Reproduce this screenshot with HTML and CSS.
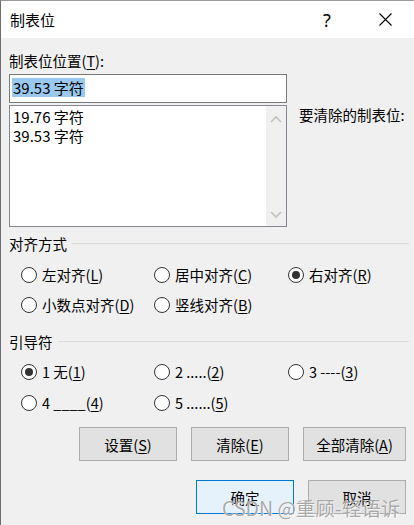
FILE: index.html
```html
<!DOCTYPE html>
<html lang="zh-CN">
<head>
<meta charset="utf-8">
<title>制表位</title>
<link rel="stylesheet" href="styles.css">
</head>
<body>
<div class="window">
  <div class="titlebar">
    <span class="title">制表位</span>
    <span class="help">?</span>
    <span class="close">
      <svg width="13" height="13" viewBox="0 0 13 13"><path d="M0.5 0.5 L12.5 12.5 M12.5 0.5 L0.5 12.5" stroke="#000" stroke-width="1.1" fill="none"/></svg>
    </span>
  </div>
  <div class="content">
    <div class="top">
      <div class="leftcol">
        <div class="label">制表位位置(<u>T</u>):</div>
        <div class="input"><span class="sel">39.53 字符</span></div>
        <div class="list">
          <div class="items">
            <div class="item">19.76 字符</div>
            <div class="item">39.53 字符</div>
          </div>
          <div class="scroll">
            <svg width="12" height="8" viewBox="0 0 12 8"><path d="M1 7 L6 2 L11 7" stroke="#c2c2c2" stroke-width="1.6" fill="none"/></svg>
            <svg width="12" height="8" viewBox="0 0 12 8"><path d="M1 1 L6 6 L11 1" stroke="#c2c2c2" stroke-width="1.6" fill="none"/></svg>
          </div>
        </div>
      </div>
      <div class="rightcol">要清除的制表位:</div>
    </div>

    <div class="group g1">
      <div class="heading"><span>对齐方式</span><i class="rule"></i></div>
      <div class="radios r1">
        <label class="radio"><span class="dot"></span>左对齐(<u>L</u>)</label>
        <label class="radio"><span class="dot"></span>居中对齐(<u>C</u>)</label>
        <label class="radio"><span class="dot on"></span>右对齐(<u>R</u>)</label>
        <label class="radio"><span class="dot"></span>小数点对齐(<u>D</u>)</label>
        <label class="radio"><span class="dot"></span>竖线对齐(<u>B</u>)</label>
      </div>
    </div>

    <div class="group g2">
      <div class="heading"><span>引导符</span><i class="rule"></i></div>
      <div class="radios r2">
        <label class="radio"><span class="dot on"></span>1 无(<u>1</u>)</label>
        <label class="radio"><span class="dot"></span>2 .....(<u>2</u>)</label>
        <label class="radio"><span class="dot"></span>3 ----(<u>3</u>)</label>
        <label class="radio"><span class="dot"></span>4 ____(<u>4</u>)</label>
        <label class="radio"><span class="dot"></span>5 ......(<u>5</u>)</label>
      </div>
    </div>

    <div class="btnrow b1">
      <div class="btn">设置(<u>S</u>)</div>
      <div class="btn">清除(<u>E</u>)</div>
      <div class="btn wide">全部清除(<u>A</u>)</div>
    </div>
    <div class="btnrow b2">
      <div class="btn primary">确定</div>
      <div class="btn">取消</div>
    </div>
  </div>
  <div class="watermark">CSDN @重顾-轻语诉</div>
</div>
</body>
</html>
```

FILE: styles.css
```css
html, body {
  margin: 0;
  padding: 0;
}
body {
  width: 414px;
  height: 525px;
  overflow: hidden;
  background: #f0f0f0;
  font-family: "Noto Sans CJK SC", "Noto Sans", sans-serif;
  font-size: 14px;
  color: #000;
}
u {
  text-decoration: underline;
  text-underline-offset: 2px;
}
.window {
  position: relative;
  height: 525px;
  box-sizing: border-box;
  border-left: 1px solid #6e6e6e;
  border-top: 1px solid #9a9a9a;
}
.titlebar {
  height: 37px;
  background: #fff;
  display: flex;
  align-items: center;
  padding-left: 9px;
}
.title {
  font-size: 15px;
  line-height: 20px;
  flex: 1;
}
.help {
  font-family: "Noto Sans", sans-serif;
  font-size: 18px;
  line-height: 20px;
  width: 10px;
  margin-right: 46px;
}
.close {
  display: flex;
  width: 13px;
  margin-right: 22px;
}
.content {
  padding: 13px 0 0 8px;
  display: flex;
  flex-direction: column;
}
.top {
  display: flex;
}
.leftcol {
  width: 278px;
  display: flex;
  flex-direction: column;
}
.label {
  line-height: 20px;
  font-size: 14.5px;
}
.input {
  margin-top: 3px;
  border: 1px solid #7a7a7a;
  background: #fff;
  padding: 3px 0 0 2px;
  box-sizing: border-box;
  height: 29px;
}
.sel {
  display: inline-block;
  background: #99c9ef;
  line-height: 19px;
  font-size: 15px;
  padding: 0 1px;
}
.list {
  margin-top: 2px;
  height: 122px;
  box-sizing: border-box;
  border: 1px solid #828790;
  background: #fff;
  display: flex;
}
.items {
  flex: 1;
  padding: 1px 0 0 3px;
}
.item {
  line-height: 19px;
  font-size: 15px;
}
.scroll {
  width: 20px;
  background: #f0f0f0;
  display: flex;
  flex-direction: column;
  align-items: center;
  justify-content: space-between;
  padding: 9px 0 7px;
}
.rightcol {
  padding: 54px 0 0 12px;
  line-height: 20px;
  font-size: 14.5px;
}
.group {
  display: flex;
  flex-direction: column;
}
.g1 {
  margin-top: 7px;
}
.g2 {
  margin-top: 17px;
}
.heading {
  display: flex;
  align-items: center;
  line-height: 20px;
  font-size: 14.5px;
  padding-right: 5px;
}
.rule {
  flex: 1;
  height: 1px;
  background: #dcdcdc;
  margin-left: 5px;
  margin-top: -2px;
}
.radios {
  display: grid;
  grid-template-columns: 133px 134px 100px;
  padding-left: 12px;
  margin-top: 11px;
}
.r1 {
  row-gap: 10px;
}
.r2 {
  margin-top: 10px;
  row-gap: 11px;
}
.radio {
  display: flex;
  align-items: center;
  line-height: 20px;
  height: 20px;
  font-size: 14.5px;
}
.dot {
  width: 16px;
  height: 16px;
  box-sizing: border-box;
  border: 1px solid #333;
  border-radius: 50%;
  background: #fff;
  margin-right: 5px;
  display: flex;
  align-items: center;
  justify-content: center;
  flex: none;
}
.dot.on::after {
  content: "";
  width: 8px;
  height: 8px;
  border-radius: 50%;
  background: #333;
}
.btnrow {
  display: flex;
  justify-content: flex-end;
  gap: 14px;
  padding-right: 8px;
}
.b1 {
  margin-top: 14px;
}
.b2 {
  margin-top: 19px;
}
.btn {
  width: 98px;
  height: 34px;
  box-sizing: border-box;
  border: 1px solid #adadad;
  background: #e1e1e1;
  display: flex;
  align-items: center;
  justify-content: center;
  font-size: 14.5px;
}
.btn.wide {
  width: 103px;
}
.btn.primary {
  border-color: #0078d7;
  background: #e5f1fb;
}
.watermark {
  position: absolute;
  left: 221px;
  top: 494px;
  font-family: "Noto Sans CJK SC", sans-serif;
  font-size: 19.5px;
  line-height: 26px;
  color: rgba(130, 130, 130, 0.7);
  text-shadow: 0 0 1px #fff, 1px 1px 0 rgba(255,255,255,0.6);
  white-space: nowrap;
}
```
